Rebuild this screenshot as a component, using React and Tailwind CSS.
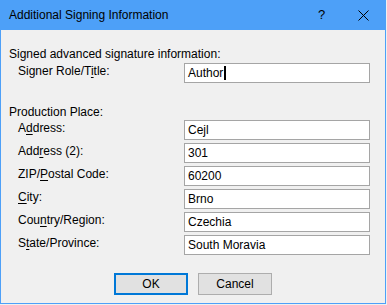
import React from 'react';

const font = { fontFamily: '"Liberation Sans", Arial, sans-serif' };

const fields = [
  { pre: 'A', key: 'd', post: 'dress:', value: 'Cejl' },
  { pre: 'Add', key: 'r', post: 'ess (2):', value: '301' },
  { pre: 'ZIP/', key: 'P', post: 'ostal Code:', value: '60200' },
  { pre: '', key: 'C', post: 'ity:', value: 'Brno' },
  { pre: 'Cou', key: 'n', post: 'try/Region:', value: 'Czechia' },
  { pre: 'S', key: 't', post: 'ate/Province:', value: 'South Moravia' },
];

const Field = ({ pre, k, post, children }) => (
  <div className="flex items-start">
    <span className="w-[183px] pl-[17px] text-[12px] leading-[16px] text-black">
      {pre}
      <span className="underline underline-offset-2">{k}</span>
      {post}
    </span>
    <div className="flex h-[20px] w-[186px] items-center border border-[#a5a5a5] bg-white px-[3px] text-[12px] text-black">
      {children}
    </div>
  </div>
);

export default function App() {
  return (
    <div className="h-[305px] w-[387px] bg-[#f0f0f0]" style={font}>
      <div className="flex h-[304px] w-[386px] flex-col border-x border-b border-[#4da0f8] bg-[#f0f0f0]">
        {/* title bar */}
        <div className="flex h-[30px] shrink-0 items-center bg-[#4da0f8] pl-[8px] text-[12px] text-black">
          <span className="flex-1">Additional Signing Information</span>
          <span className="w-[40px] text-[13px]">?</span>
          <span className="flex w-[27px] items-center">
            <svg width="11" height="11" viewBox="0 0 11 11">
              <path d="M0.5 0.5 L10.5 10.5 M10.5 0.5 L0.5 10.5" stroke="#000" strokeWidth="1" />
            </svg>
          </span>
        </div>

        <div className="flex flex-1 flex-col">
          <div className="mt-[16px] pl-[8px] text-[12px] leading-[16px] text-black">
            Signed advanced signature information:
          </div>
          <div className="mt-[1px]">
            <Field pre="Signer Role/T" k="i" post="tle:">
              <span>Author</span>
              <span className="ml-[1px] h-[14px] w-[2px] bg-black" />
            </Field>
          </div>

          <div className="mt-[21px] pl-[8px] text-[12px] leading-[16px] text-black">
            Production Place:
          </div>
          <div className="flex flex-col gap-[3px]">
            {fields.map((f) => (
              <Field key={f.value} pre={f.pre} k={f.key} post={f.post}>
                {f.value}
              </Field>
            ))}
          </div>

          <div className="mt-[18px] flex justify-center gap-[10px]">
            <button className="flex h-[22px] w-[74px] items-center justify-center border-2 border-[#0078d7] bg-[#e1e1e1] text-[12px] text-black">
              OK
            </button>
            <button className="flex h-[22px] w-[74px] items-center justify-center border border-[#adadad] bg-[#e1e1e1] text-[12px] text-black">
              Cancel
            </button>
          </div>
        </div>
      </div>
    </div>
  );
}
